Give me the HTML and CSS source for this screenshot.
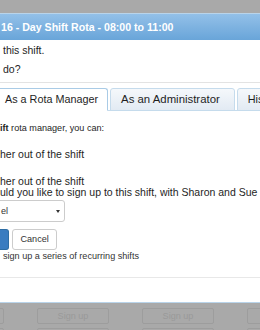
FILE: index.html
```html
<!DOCTYPE html>
<html lang="en">
<head>
<meta charset="utf-8">
<title>Day Shift Rota</title>
<link rel="stylesheet" href="styles.css">
</head>
<body>
<main class="page">
  <div class="slot-row">
    <span class="slot"></span>
    <span class="slot">Sign up</span>
    <span class="slot">Sign up</span>
    <span class="slot"></span>
  </div>
  <div class="slot-row">
    <span class="slot"></span>
    <span class="slot"></span>
    <span class="slot"></span>
    <span class="slot"></span>
  </div>
</main>

<section class="dialog" role="dialog">
  <header class="dialog-title">16 - Day Shift Rota - 08:00 to 11:00</header>
  <div class="dialog-body">
    <p class="lead">this shift.</p>
    <p class="lead lead-second">do?</p>
    <div class="rule"></div>
    <ul class="tabs">
      <li class="tab tab-active">As a Rota Manager</li>
      <li class="tab tab-admin">As an Administrator</li>
      <li class="tab">His</li>
    </ul>
    <div class="panel">
      <p class="intro"><b>ift</b> rota manager, you can:</p>
      <p class="option option-first">her out of the shift</p>
      <p class="option option-second">her out of the shift</p>
      <p class="question">uld you like to sign up to this shift, with Sharon and Sue</p>
      <div class="select"><span>el</span><span class="caret"></span></div>
      <div class="actions">
        <span class="btn btn-primary"></span>
        <span class="btn btn-default">Cancel</span>
      </div>
      <p class="recurring">sign up a series of recurring shifts</p>
    </div>
    <div class="footer"></div>
  </div>
</section>
</body>
</html>
```
FILE: styles.css
```css
html, body {
  margin: 0;
  padding: 0;
  overflow: hidden;
}
body {
  width: 260px;
  height: 330px;
  background: #a9a9a9;
  font-family: "Liberation Sans", Arial, sans-serif;
  color: #222;
  position: relative;
}

/* page behind the overlay */
.page {
  padding-top: 308px;
  overflow: hidden;
}
.slot-row {
  display: flex;
  gap: 33px;
  margin-left: -68px;
  margin-bottom: 4px;
}
.slot {
  flex: none;
  width: 70px;
  height: 14px;
  border: 1px solid #9d9d9d;
  border-radius: 2px;
  color: #999;
  font-size: 9.1px;
  line-height: 14px;
  text-align: center;
}

/* dialog */
.dialog {
  position: absolute;
  top: 13px;
  left: -1px;
  width: 260px;
  background: #fff;
  border: 1px solid #b9d4ea;
  overflow: hidden;
}
.dialog-title {
  height: 26px;
  line-height: 26px;
  padding-left: 1px;
  background: linear-gradient(#93c0e8, #69a5d9);
  color: #fff;
  font-weight: bold;
  font-size: 10.6px;
  white-space: nowrap;
}
.dialog-body {
  padding-top: 3px;
}
.lead {
  margin: 0 0 4px;
  padding-left: 3px;
  font-size: 10.5px;
  line-height: 15px;
  color: #1e1e1e;
}
.rule {
  margin-top: 5px;
  border-top: 1px solid #e3e3e3;
}

/* tabs */
.tabs {
  list-style: none;
  margin: 5px 0 0 -6px;
  padding: 0;
  display: flex;
  gap: 2px;
  border-bottom: 1px solid #c5dbec;
  height: 22px;
}
.tab {
  flex: none;
  height: 21px;
  line-height: 21px;
  padding: 0 9px 0 10px;
  border: 1px solid #c5dbec;
  border-top-left-radius: 3px;
  border-top-right-radius: 3px;
  background: linear-gradient(#f5f8fb, #e2eaf3);
  font-size: 10.8px;
  color: #1e1e1e;
  white-space: nowrap;
}
.tab-active {
  background: #fff;
  border-color: #a9cbe6;
  border-bottom-color: #fff;
}
.tab-admin {
  font-size: 11.4px;
  padding-right: 14px;
}

/* panel */
.panel {
  padding-top: 10px;
}
.intro {
  margin: 0;
  font-size: 9.1px;
  line-height: 14px;
  color: #1e1e1e;
}
.intro b {
  font-weight: bold;
}
.option,
.question {
  margin: 0;
  font-size: 10.5px;
  line-height: 11px;
  color: #1e1e1e;
  white-space: nowrap;
}
.option-first {
  margin-top: 14px;
}
.option-second {
  margin-top: 16px;
}
.select {
  margin: 2px 0 0 -8px;
  width: 59px;
  height: 20px;
  padding: 0 4px 0 8px;
  border: 1px solid #ccc;
  border-radius: 3px;
  display: flex;
  align-items: center;
  justify-content: space-between;
  font-size: 9.1px;
  color: #333;
}
.caret {
  width: 0;
  height: 0;
  border-left: 2.5px solid transparent;
  border-right: 2.5px solid transparent;
  border-top: 3px solid #333;
}
.actions {
  margin-top: 7px;
  display: flex;
  gap: 3px;
  height: 21px;
}
.btn {
  flex: none;
  height: 19px;
  line-height: 19px;
  border: 1px solid #ccc;
  border-radius: 3px;
  padding: 0 7.5px;
  font-size: 9.1px;
  white-space: nowrap;
}
.btn-primary {
  width: 8px;
  padding: 0;
  border-left: 0;
  border-top-left-radius: 0;
  border-bottom-left-radius: 0;
  background: #3a7cc0;
  border-color: #2e6da4;
}
.btn-default {
  background: #fff;
  color: #333;
}
.recurring {
  margin: 0;
  padding-left: 3px;
  font-size: 9.1px;
  line-height: 13px;
  color: #333;
}
.footer {
  margin-top: 14px;
  height: 24px;
  border-top: 1px solid #e8e8e8;
}
```
